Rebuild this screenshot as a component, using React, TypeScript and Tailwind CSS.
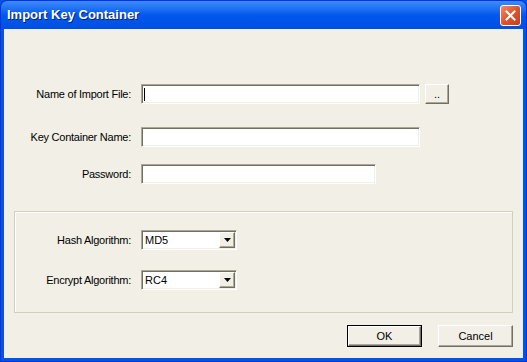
const sunken =
  "bg-white border border-t-[#aca899] border-l-[#aca899] border-b-white border-r-white shadow-[inset_1px_1px_0_#716f64,inset_-1px_-1px_0_#f1efe2]";
const raised =
  "bg-[#f1efe6] border border-t-white border-l-white border-b-[#716f64] border-r-[#716f64] shadow-[inset_-1px_-1px_0_#aca899]";

function Label({ w, children }: { w: string; children: string }) {
  return <div className={`${w} text-right text-[11px] leading-none tracking-[-0.25px] text-black`}>{children}</div>;
}

function Combo({ value }: { value: string }) {
  return (
    <div className={`ml-[10px] w-[96px] h-[20px] flex items-stretch ${sunken} p-[1px]`}>
      <div className="flex-1 pl-[2px] flex items-center text-[11px] text-black">{value}</div>
      <div className={`w-[16px] flex items-center justify-center ${raised}`}>
        <svg width="7" height="4" viewBox="0 0 7 4">
          <path d="M0 0h7L3.5 4z" fill="#000" />
        </svg>
      </div>
    </div>
  );
}

export default function App() {
  return (
    <div className="w-[527px] h-[362px] flex flex-col bg-[#0055e5] font-['Liberation_Sans',Arial,sans-serif] select-none">
      {/* title bar */}
      <div className="h-[29px] rounded-t-[7px] bg-gradient-to-b from-[#3d8bf8] via-[#0058ee] to-[#004fe0] border border-b-0 border-[#0831d9] flex items-center pl-[6px] pr-[5px]">
        <div className="flex-1 text-white font-bold text-[13px] [text-shadow:1px_1px_0_#0a1d7a]">Import Key Container</div>
        <div className="w-[21px] h-[21px] rounded-[3px] border border-white bg-gradient-to-br from-[#f08a67] via-[#e0532b] to-[#c2401c] flex items-center justify-center">
          <svg width="11" height="11" viewBox="0 0 11 11">
            <path d="M1.5 1.5l8 8M9.5 1.5l-8 8" stroke="#fff" strokeWidth="2" strokeLinecap="square" />
          </svg>
        </div>
      </div>

      {/* client */}
      <div className="flex-1 border-x border-b border-[#0831d9] px-[3px] pb-[3px] flex">
        <div className="flex-1 bg-[#f1efe6] flex flex-col pt-[55px]">
          <div className="h-[20px] flex items-center">
            <Label w="w-[127px]">Name of Import File:</Label>
            <div className={`ml-[10px] w-[279px] h-[20px] ${sunken} flex items-center pl-[2px]`}>
              <div className="w-[1px] h-[13px] bg-black" />
            </div>
            <div className={`ml-[5px] w-[24px] h-[20px] ${raised} flex items-center justify-center text-[11px] text-black pt-[1px]`}>..</div>
          </div>

          <div className="mt-[23px] h-[20px] flex items-center">
            <Label w="w-[127px]">Key Container Name:</Label>
            <div className={`ml-[10px] w-[279px] h-[20px] ${sunken}`} />
          </div>

          <div className="mt-[17px] h-[20px] flex items-center">
            <Label w="w-[127px]">Password:</Label>
            <div className={`ml-[10px] w-[235px] h-[20px] ${sunken}`} />
          </div>

          <div className="mt-[27px] ml-[10px] w-[499px] h-[102px] border border-[#d0d0bf] shadow-[inset_1px_1px_0_#ffffff] flex flex-col pt-[18px]">
            <div className="h-[20px] flex items-center">
              <Label w="w-[116px]">Hash Algorithm:</Label>
              <Combo value="MD5" />
            </div>
            <div className="mt-[20px] h-[20px] flex items-center">
              <Label w="w-[116px]">Encrypt Algorithm:</Label>
              <Combo value="RC4" />
            </div>
          </div>

          <div className="mt-[12px] flex justify-end pr-[10px] gap-[16px]">
            <div className="w-[75px] h-[22px] border border-black">
              <div className={`w-full h-full ${raised} flex items-center justify-center text-[11px] text-black`}>OK</div>
            </div>
            <div className={`w-[75px] h-[22px] ${raised} flex items-center justify-center text-[11px] text-black`}>Cancel</div>
          </div>
        </div>
      </div>
    </div>
  );
}
